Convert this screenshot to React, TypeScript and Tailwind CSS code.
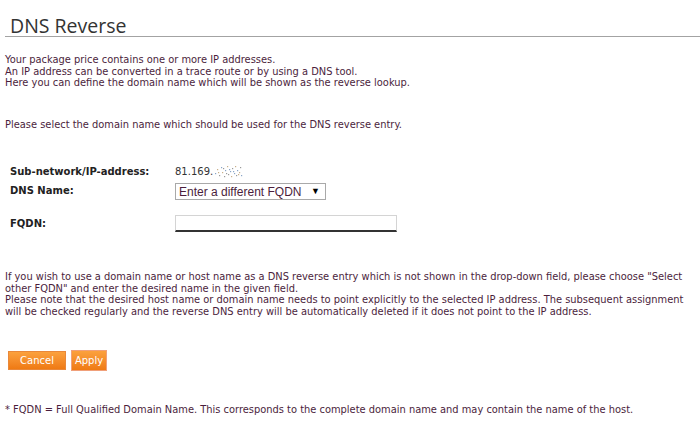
import React from "react";

const body = { fontFamily: '"DejaVu Sans", Verdana, sans-serif' };

const Blur = () => (
  <svg width="30" height="14" viewBox="0 0 30 14" className="inline-block align-middle">
    {[
      [2, 9], [4, 5], [6, 11], [8, 3], [9, 8], [11, 12], [12, 6], [14, 2], [15, 10], [17, 7],
      [18, 12], [19, 4], [21, 9], [22, 2], [23, 11], [24, 6], [26, 8], [27, 3], [28, 11], [5, 8],
      [13, 9], [20, 7], [25, 10], [10, 4], [16, 5],
    ].map(([x, y], i) => (
      <rect key={i} x={x} y={y} width="1.2" height="1.2" fill={i % 3 === 0 ? "#8aa6c8" : i % 3 === 1 ? "#c9b08a" : "#9a9a9a"} />
    ))}
  </svg>
);

export default function App() {
  return (
    <div className="w-[700px] h-[446px] bg-white overflow-hidden" style={body}>
      <div className="pt-[15px] pl-[5px]">
        <h1
          className="pl-[5px] text-[19.5px] leading-[21px] text-[#333] border-b border-[#a3a3a3]"
          style={{ fontFamily: '"Open Sans", sans-serif' }}
        >
          DNS Reverse
        </h1>
      </div>

      <div className="px-[5px] text-[9.9px] leading-[11.5px] text-[#4b1e3c]">
        <p className="mt-[17px]">
          Your package price contains one or more IP addresses.
          <br />
          An IP address can be converted in a trace route or by using a DNS tool.
          <br />
          Here you can define the domain name which will be shown as the reverse lookup.
        </p>
        <p className="mt-[30px]">Please select the domain name which should be used for the DNS reverse entry.</p>
      </div>

      <div className="mt-[34px] pl-[10px] text-[10px] text-[#222]">
        <div className="flex items-center h-[14px]">
          <div className="w-[165px] font-bold">Sub-network/IP-address:</div>
          <div className="text-[#333] flex items-center">
            81.169.
            <Blur />
          </div>
        </div>
        <div className="flex items-start mt-[5px]">
          <div className="w-[165px] font-bold">DNS Name:</div>
          <div
            className="w-[151px] h-[17px] border border-[#a9a9a9] bg-white flex items-center justify-between pl-[3px] pr-[5px] text-[12px] text-[#4b1e3c]"
            style={{ fontFamily: '"Liberation Sans", Arial, sans-serif' }}
          >
            <span>Enter a different FQDN</span>
            <span className="text-[9px] text-black">▼</span>
          </div>
        </div>
        <div className="flex items-center mt-[15px]">
          <div className="w-[165px] font-bold">FQDN:</div>
          <div className="w-[222px] h-[17px] border border-[#d4d4d4] border-b-2 border-b-[#333] bg-white" />
        </div>
      </div>

      <div className="px-[5px] mt-[39px] text-[9.9px] leading-[11.5px] text-[#4b1e3c]">
        <p>
          If you wish to use a domain name or host name as a DNS reverse entry which is not shown in the drop-down field, please choose "Select other FQDN" and enter the desired name in the given field.
          <br />
          Please note that the desired host name or domain name needs to point explicitly to the selected IP address. The subsequent assignment will be checked regularly and the reverse DNS entry will be automatically deleted if it does not point to the IP address.
        </p>
      </div>

      <div className="flex items-center gap-[5px] pl-[8px] mt-[33px]">
        <button className="w-[58px] h-[19px] bg-gradient-to-b from-[#fba13d] to-[#ef7a12] border border-[#e9883a] text-white text-[10px]">
          Cancel
        </button>
        <button className="w-[36px] h-[21px] bg-gradient-to-b from-[#fba13d] to-[#ef7a12] border border-[#f0a07a] text-white text-[10px]">
          Apply
        </button>
      </div>

      <p className="px-[5px] mt-[33px] text-[9.9px] leading-[11.5px] text-[#4b1e3c]">
        * FQDN = Full Qualified Domain Name. This corresponds to the complete domain name and may contain the name of the host.
      </p>
    </div>
  );
}
